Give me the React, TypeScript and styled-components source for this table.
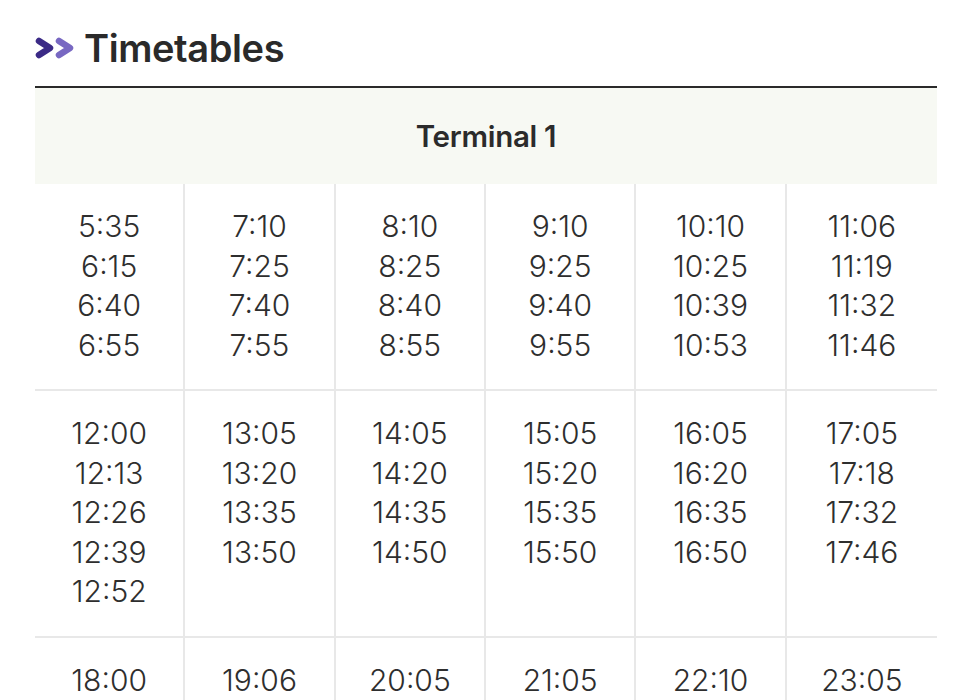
import React from "react";
import styled, { createGlobalStyle } from "styled-components";

const Global = createGlobalStyle`
  html, body { margin: 0; padding: 0; background: #ffffff; }
  body { font-family: Inter, "Liberation Sans", sans-serif; color: #2b2b2b; }
`;

const Page = styled.div`
  padding: 24px 35px 0 35px;
  width: 902px;
`;

const TitleRow = styled.div`
  display: flex;
  align-items: center;
  gap: 8px;
  height: 48px;
  padding-bottom: 14px;
  border-bottom: 2px solid #2a2a2a;
`;

const Title = styled.h1`
  margin: 0;
  font-size: 38px;
  font-weight: 600;
  letter-spacing: -0.4px;
  color: #2a2a2a;
`;

const Table = styled.div`
  display: grid;
  grid-template-columns: repeat(6, 1fr);
`;

const HeaderCell = styled.div`
  grid-column: 1 / -1;
  height: 96px;
  background: #f7f9f3;
  display: flex;
  align-items: center;
  justify-content: center;
  font-size: 29.5px;
  font-weight: 600;
  color: #2b2b2b;
  letter-spacing: -0.3px;
`;

const Cell = styled.div<{ $last: boolean; $bottom: boolean }>`
  padding: 23px 0 24px;
  border-right: ${(p) => (p.$last ? "none" : "2px solid #e8e8e8")};
  border-bottom: ${(p) => (p.$bottom ? "2px solid #e8e8e8" : "none")};
  display: flex;
  flex-direction: column;
  align-items: center;
`;

const Time = styled.div`
  font-size: 30px;
  line-height: 39.5px;
  font-weight: 300;
  color: #2e2e2e;
`;

const rows: string[][][] = [
  [
    ["5:35", "6:15", "6:40", "6:55"],
    ["7:10", "7:25", "7:40", "7:55"],
    ["8:10", "8:25", "8:40", "8:55"],
    ["9:10", "9:25", "9:40", "9:55"],
    ["10:10", "10:25", "10:39", "10:53"],
    ["11:06", "11:19", "11:32", "11:46"],
  ],
  [
    ["12:00", "12:13", "12:26", "12:39", "12:52"],
    ["13:05", "13:20", "13:35", "13:50"],
    ["14:05", "14:20", "14:35", "14:50"],
    ["15:05", "15:20", "15:35", "15:50"],
    ["16:05", "16:20", "16:35", "16:50"],
    ["17:05", "17:18", "17:32", "17:46"],
  ],
  [
    ["18:00"],
    ["19:06"],
    ["20:05"],
    ["21:05"],
    ["22:10"],
    ["23:05"],
  ],
];

const Chevrons = () => (
  <svg width="41" height="22" viewBox="0 0 41 22" fill="none" strokeLinecap="round" strokeLinejoin="round">
    <polyline points="4,4 15,11 4,18" stroke="#3b2a86" strokeWidth="6.5" />
    <polyline points="24,4 35,11 24,18" stroke="#7868c2" strokeWidth="6.5" />
  </svg>
);

export default function App() {
  return (
    <>
      <Global />
      <Page>
        <TitleRow>
          <Chevrons />
          <Title>Timetables</Title>
        </TitleRow>
        <Table>
          <HeaderCell>Terminal 1</HeaderCell>
          {rows.map((row, ri) =>
            row.map((col, ci) => (
              <Cell key={`${ri}-${ci}`} $last={ci === 5} $bottom={ri < rows.length - 1}>
                {col.map((t) => (
                  <Time key={t}>{t}</Time>
                ))}
              </Cell>
            ))
          )}
        </Table>
      </Page>
    </>
  );
}
